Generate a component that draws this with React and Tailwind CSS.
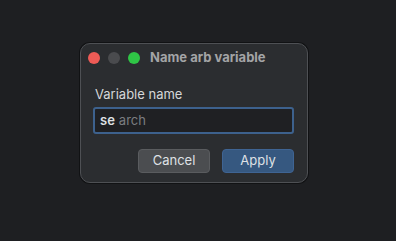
export default function App() {
  return (
    <div
      className="flex h-[241px] w-[396px] items-start bg-[#1e1f22] pt-[43px] pl-[80px]"
      style={{ fontFamily: "Inter, 'Noto Sans', sans-serif" }}
    >
      {/* Dialog */}
      <div className="flex h-[140px] w-[228px] flex-col rounded-[10px] border border-[#4e5054] bg-[#2b2d30] shadow-[0_0_0_1px_#111214]">
        {/* Title bar */}
        <div className="flex h-[28px] items-center pl-[7px]">
          <div className="flex gap-[8px]">
            <span className="h-[12px] w-[12px] rounded-full bg-[#ee5b56]" />
            <span className="h-[12px] w-[12px] rounded-full bg-[#4a4b4e]" />
            <span className="h-[12px] w-[12px] rounded-full bg-[#2fc546]" />
          </div>
          <span className="ml-[10px] text-[13px] font-bold text-[#a3a4a6]">
            Name arb variable
          </span>
        </div>

        {/* Body */}
        <div className="flex flex-col px-[12px] pt-[14px]">
          <label className="pl-[2px] text-[13px] leading-[16px] text-[#d6d7d9]">Variable name</label>
          <div className="mt-[5px] flex h-[27px] w-[201px] items-center rounded-[3px] border-2 border-[#3d618d] bg-[#1f2023] px-[5px] text-[13px]">
            <span className="font-semibold text-[#dfe1e5]">se</span>
            <span className="ml-[4px] text-[#7b7d80]">arch</span>
          </div>
          <div className="mt-[15px] flex justify-end gap-[12px] pr-[1px]">
            <button className="h-[24px] w-[72px] rounded-[4px] border border-[#5a5c5f] bg-[#4b4d50] text-[13px] text-[#dfe1e5]">
              Cancel
            </button>
            <button className="h-[24px] w-[72px] rounded-[4px] border border-[#3f6493] bg-[#365880] text-[13px] text-[#dfe1e5]">
              Apply
            </button>
          </div>
        </div>
      </div>
    </div>
  );
}
